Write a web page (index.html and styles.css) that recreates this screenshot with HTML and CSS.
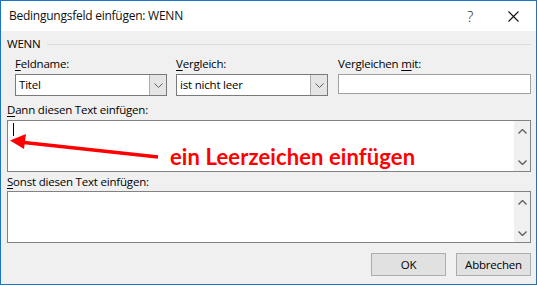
FILE: index.html
```html
<!DOCTYPE html>
<html lang="de">

<head>
    <meta charset="UTF-8">
    <meta name="viewport" content="width=device-width, initial-scale=1.0">
    <title>Bedingungsfeld einfügen: WENN</title>
    <link rel="stylesheet" href="styles.css">
</head>

<body>
    <div class="dialog">
        <div class="titlebar">
            <div class="title">Bedingungsfeld einfügen: WENN</div>
            <div class="title-btn help">?</div>
            <div class="title-btn">
                <svg width="11" height="11" viewBox="0 0 11 11"><path d="M0.5 0.5 L10.5 10.5 M10.5 0.5 L0.5 10.5" stroke="#111" stroke-width="1.1" fill="none"/></svg>
            </div>
        </div>

        <div class="content">
            <div class="group-label">WENN</div>

            <div class="fields">
                <div class="field">
                    <label><u>F</u>eldname:</label>
                    <div class="combo">
                        <span class="combo-text">Titel</span>
                        <span class="combo-btn">
                            <svg width="9" height="5" viewBox="0 0 9 5"><path d="M0.5 0.5 L4.5 4.5 L8.5 0.5" stroke="#606060" fill="none"/></svg>
                        </span>
                    </div>
                </div>
                <div class="field">
                    <label><u>V</u>ergleich:</label>
                    <div class="combo">
                        <span class="combo-text">ist nicht leer</span>
                        <span class="combo-btn">
                            <svg width="9" height="5" viewBox="0 0 9 5"><path d="M0.5 0.5 L4.5 4.5 L8.5 0.5" stroke="#606060" fill="none"/></svg>
                        </span>
                    </div>
                </div>
                <div class="field">
                    <label>Vergleichen <u>m</u>it:</label>
                    <div class="textbox"></div>
                </div>
            </div>

            <label class="area-label"><u>D</u>ann diesen Text einfügen:</label>
            <div class="textarea">
                <div class="area-body"><span class="caret"></span></div>
                <div class="scrollbar">
                    <svg width="9" height="5" viewBox="0 0 9 5"><path d="M0.5 4.5 L4.5 0.5 L8.5 4.5" stroke="#606060" stroke-width="1.4" fill="none"/></svg>
                    <svg width="9" height="5" viewBox="0 0 9 5"><path d="M0.5 0.5 L4.5 4.5 L8.5 0.5" stroke="#606060" stroke-width="1.4" fill="none"/></svg>
                </div>
            </div>

            <label class="area-label second"><u>S</u>onst diesen Text einfügen:</label>
            <div class="textarea">
                <div class="area-body"></div>
                <div class="scrollbar">
                    <svg width="9" height="5" viewBox="0 0 9 5"><path d="M0.5 4.5 L4.5 0.5 L8.5 4.5" stroke="#606060" stroke-width="1.4" fill="none"/></svg>
                    <svg width="9" height="5" viewBox="0 0 9 5"><path d="M0.5 0.5 L4.5 4.5 L8.5 0.5" stroke="#606060" stroke-width="1.4" fill="none"/></svg>
                </div>
            </div>

            <div class="buttons">
                <div class="btn">OK</div>
                <div class="btn">Abbrechen</div>
            </div>
        </div>

        <!-- annotation drawn over the dialog -->
        <svg class="arrow" width="160" height="30" viewBox="0 0 160 30">
            <path d="M22 11.5 L156 26" stroke="#f00" stroke-width="3.5" fill="none"/>
            <path d="M8 9.5 L24 3 L22 18 Z" fill="#f00"/>
        </svg>
        <div class="note">ein Leerzeichen einfügen</div>
    </div>
</body>

</html>
```

FILE: styles.css
```css
* {
    box-sizing: border-box;
}

body {
    margin: 0;
    font-family: "Open Sans", "Noto Sans", sans-serif;
    font-size: 11.5px;
    letter-spacing: -0.2px;
    color: #000;
    background: #fff;
}

u {
    text-decoration: underline;
    text-underline-offset: 2px;
}

.dialog {
    position: relative;
    width: 537px;
    height: 285px;
    border: 1px solid #1c74c6;
    background-color: #f0f0f0;
    display: flex;
    flex-direction: column;
}

.titlebar {
    height: 30px;
    background-color: #fff;
    display: flex;
    align-items: center;
}

.title {
    flex: 1;
    padding-left: 8px;
    font-size: 12px;
    letter-spacing: -0.25px;
    color: #111;
    padding-bottom: 1px;
}

.title-btn {
    width: 45px;
    height: 30px;
    display: flex;
    align-items: center;
    justify-content: center;
    font-size: 15px;
    color: #222;
}

.title-btn.help {
    font-weight: 300;
    padding-left: 3px;
}

.content {
    flex: 1;
    padding: 5px 5px 0 6px;
    display: flex;
    flex-direction: column;
}

.group-label {
    display: flex;
    align-items: center;
    line-height: 16px;
    height: 16px;
}

.group-label::after {
    content: "";
    flex: 1;
    height: 1px;
    background-color: #dcdcdc;
    margin-left: 6px;
    margin-top: 1px;
}

.fields {
    display: grid;
    grid-template-columns: 152px 152px 1fr;
    column-gap: 9px;
    margin: 4px 0 0 8px;
}

.fields .field:last-child {
    margin-left: 1px;
}

.field label {
    display: block;
    line-height: 16px;
    height: 16px;
    margin-bottom: 2px;
}

.combo {
    display: flex;
    height: 22px;
    border: 1px solid #7a7a7a;
    background-color: #fff;
}

.combo-text {
    flex: 1;
    padding-left: 3px;
    line-height: 19px;
}

.combo-btn {
    width: 17px;
    background-color: #e5e5e5;
    border-left: 1px solid #acacac;
    display: flex;
    align-items: center;
    justify-content: center;
}

.textbox {
    height: 20px;
    margin-top: 1px;
    border: 1px solid #a0a0a0;
    background-color: #fff;
}

.area-label {
    display: block;
    line-height: 16px;
    height: 16px;
    margin-top: 6px;
    margin-bottom: 2px;
}

.area-label.second {
    margin-top: 2px;
    margin-bottom: 1px;
}

.textarea {
    display: flex;
    height: 52px;
    border: 1px solid #828282;
    background-color: #fff;
}

.area-body {
    flex: 1;
    padding: 2px 0 0 5px;
}

.caret {
    display: block;
    width: 1px;
    height: 13px;
    background-color: #000;
}

.scrollbar {
    width: 16px;
    background-color: #f0f0f0;
    display: flex;
    flex-direction: column;
    align-items: center;
    justify-content: space-between;
    padding: 8px 0 6px;
}

.buttons {
    display: flex;
    justify-content: flex-end;
    gap: 10px;
    margin-top: 10px;
}

.btn {
    width: 75px;
    height: 23px;
    border: 1px solid #adadad;
    background-color: #e1e1e1;
    display: flex;
    align-items: center;
    justify-content: center;
    padding-bottom: 1px;
}

.arrow {
    position: absolute;
    left: 1px;
    top: 130px;
}

.note {
    position: absolute;
    left: 169px;
    top: 143px;
    font-family: Lato, "Liberation Sans", sans-serif;
    font-weight: 700;
    font-size: 22px;
    line-height: 26px;
    letter-spacing: 0.1px;
    color: #f00;
}
```
